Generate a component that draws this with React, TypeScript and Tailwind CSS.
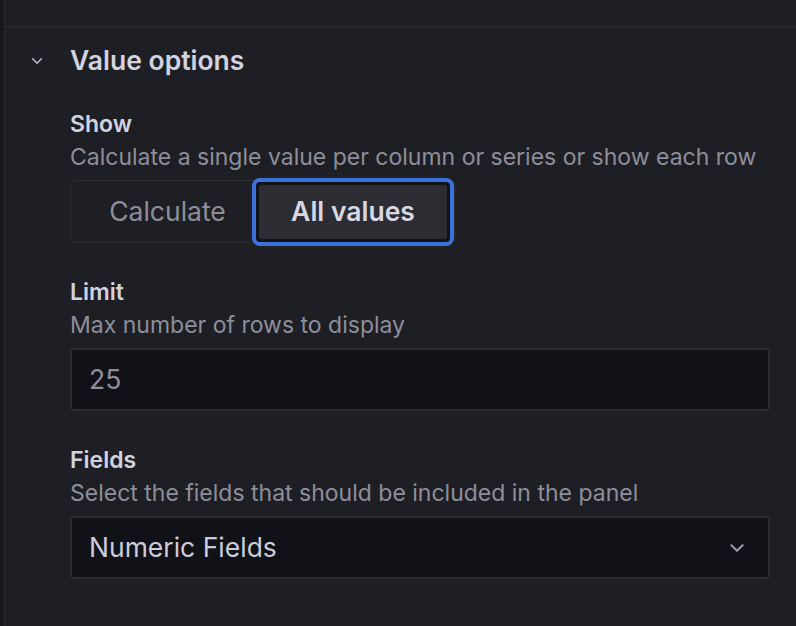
import type { ReactNode } from "react";

interface FieldProps {
  label: string;
  description: string;
  first?: boolean;
  children: ReactNode;
}

const Field = ({ label, description, first = false, children }: FieldProps) => {
  return (
    <div className={first ? "mt-[19px]" : "mt-[35px]"}>
      <div className="text-[23px] leading-[28px] font-semibold text-[#d3d3e0]">
        {label}
      </div>
      <div className="mt-[5px] text-[23px] leading-[28px] text-[#8e8e9b]">
        {description}
      </div>
      <div className="mt-[9px]">{children}</div>
    </div>
  );
};

const Chevron = ({ className }: { className?: string }) => (
  <svg
    viewBox="0 0 16 16"
    className={className}
    fill="none"
    stroke="currentColor"
    strokeWidth={1.8}
    strokeLinecap="round"
    strokeLinejoin="round"
  >
    <polyline points="3,5.5 8,10.5 13,5.5" />
  </svg>
);

const App = () => {
  return (
    <div className="w-[796px] h-[626px] overflow-hidden bg-[#1e1f24] [font-family:Inter,sans-serif] flex">
      {/* left gutter */}
      <div className="w-[5px] bg-[#17181c] border-r border-[#2a2b30]" />

      <div className="flex-1 flex flex-col">
        {/* previous section */}
        <div className="h-[28px] border-b-2 border-[#292a30]" />

        {/* header */}
        <div className="h-[63px] flex items-center">
          <Chevron className="ml-[25px] mt-[2px] w-[14px] h-[14px] text-[#b9b9c6]" />
          <span className="ml-[26px] mt-[2px] text-[26.5px] font-semibold text-[#d3d3e0]">
            Value options
          </span>
        </div>

        <div className="pl-[65px] pr-[26px]">
          <Field
            first
            label="Show"
            description="Calculate a single value per column or series or show each row"
          >
            <div className="inline-flex items-center h-[63px] border border-[#2c2d33] rounded-[4px]">
              <div className="w-[181px] pl-[12px] text-center text-[26.5px] text-[#8e8e9b]">
                Calculate
              </div>
              <div className="h-[68px] w-[202px] rounded-[8px] border-[4px] border-[#3d71d9] p-[3px] bg-[#111217]">
                <div className="h-full rounded-[3px] bg-[#2c2d33] flex items-center justify-center text-[26.5px] font-semibold text-[#d8d8e4]">
                  All values
                </div>
              </div>
            </div>
          </Field>

          <Field label="Limit" description="Max number of rows to display">
            <div className="h-[63px] bg-[#111217] border-2 border-[#2a2b31] rounded-[4px] flex items-center px-[17px] text-[26.5px] text-[#8e8e9b]">
              25
            </div>
          </Field>

          <Field
            label="Fields"
            description="Select the fields that should be included in the panel"
          >
            <div className="h-[63px] bg-[#111217] border-2 border-[#2a2b31] rounded-[4px] flex items-center justify-between pl-[17px] pr-[22px] text-[26.5px] text-[#ccccdc]">
              <span>Numeric Fields</span>
              <Chevron className="w-[18px] h-[18px] text-[#9a9aa6]" />
            </div>
          </Field>
        </div>
      </div>
    </div>
  );
};

export default App;
